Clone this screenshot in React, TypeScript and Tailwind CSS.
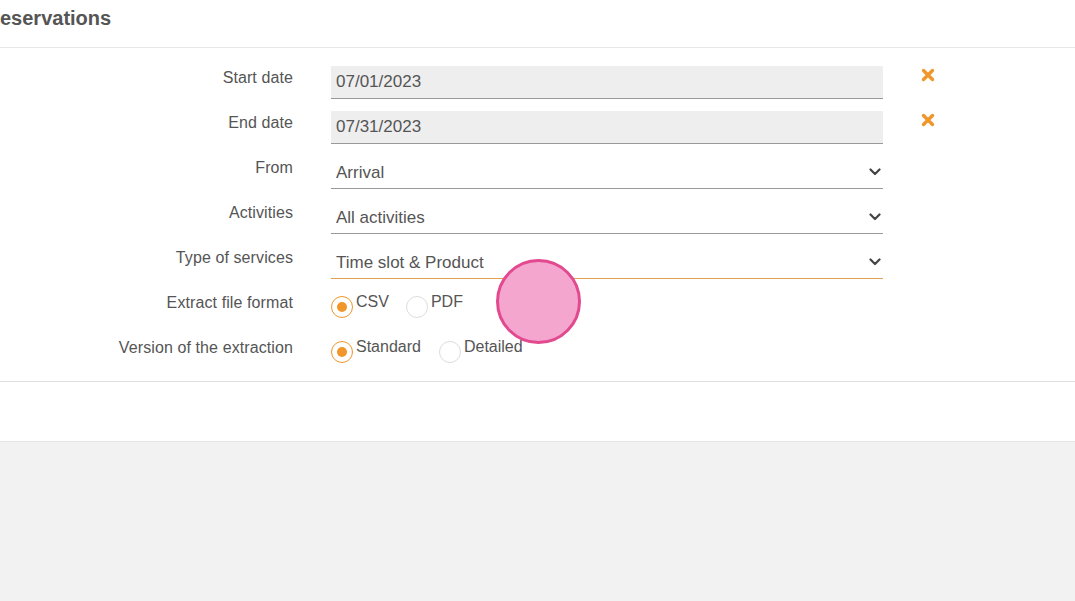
import { useState } from "react";

const font = { fontFamily: '"Liberation Sans", Arial, sans-serif' };

const Chevron = () => (
  <svg width="12" height="8" viewBox="0 0 12 8" className="shrink-0">
    <path d="M1.5 1.5 L6 6 L10.5 1.5" fill="none" stroke="#444" strokeWidth="2.2" strokeLinecap="round" strokeLinejoin="round" />
  </svg>
);

const Cross = () => (
  <svg width="14" height="14" viewBox="0 0 14 14">
    <path d="M2.5 2.5 L11.5 11.5 M11.5 2.5 L2.5 11.5" stroke="#f0962a" strokeWidth="3.4" strokeLinecap="round" />
  </svg>
);

const Row = ({ label, children, extra }: { label: string; children: React.ReactNode; extra?: React.ReactNode }) => (
  <div className="flex h-[45px]">
    <div className="w-[293px] shrink-0 text-right text-[16px] leading-[20px] pt-[2px] tracking-[0.1px] text-[#555]">{label}</div>
    <div className="ml-[38px] w-[552px] shrink-0">{children}</div>
    <div className="ml-[38px] pt-[2px]">{extra}</div>
  </div>
);

const DateInput = ({ value }: { value: string }) => (
  <div className="h-[33px] bg-[#eeeeee] border-b border-[#999] pl-[5px] text-[17px] leading-[32px] text-[#555]">{value}</div>
);

const Select = ({ value, active }: { value: string; active?: boolean }) => (
  <div className={`h-[33px] flex items-center justify-between border-b pl-[5px] pr-[2px] text-[17px] text-[#555] ${active ? "border-[#e0a050]" : "border-[#999]"}`}>
    <span className="pt-[2px]">{value}</span>
    <Chevron />
  </div>
);

const Radio = ({ label, checked, onClick, gap }: { label: string; checked: boolean; onClick: () => void; gap: string }) => (
  <button className={`flex items-start ${gap}`} onClick={onClick}>
    <span className={`mt-[5px] w-[22px] h-[22px] rounded-full border flex items-center justify-center ${checked ? "border-[#f0962a]" : "border-[#ddd]"}`}>
      {checked && <span className="w-[10px] h-[10px] rounded-full bg-[#f0962a]" />}
    </span>
    <span className="ml-[3px] pt-[1px] text-[16px] leading-[20px] text-[#555]">{label}</span>
  </button>
);

export default function App() {
  const [format, setFormat] = useState("CSV");
  const [version, setVersion] = useState("Standard");

  return (
    <div className="relative min-h-[601px] bg-[#f2f2f2] overflow-hidden" style={font}>
      <div className="bg-white">
        <div className="h-[48px] border-b border-[#e8e8e8] flex items-center">
          <h1 className="text-[20px] font-bold text-[#555] -mt-[11px]">eservations</h1>
        </div>
        <div className="pt-[18px] border-b border-[#e0e0e0]">
          <Row label="Start date" extra={<Cross />}>
            <DateInput value="07/01/2023" />
          </Row>
          <Row label="End date" extra={<Cross />}>
            <DateInput value="07/31/2023" />
          </Row>
          <Row label="From">
            <Select value="Arrival" />
          </Row>
          <Row label="Activities">
            <Select value="All activities" />
          </Row>
          <Row label="Type of services">
            <Select value="Time slot & Product" active />
          </Row>
          <Row label="Extract file format">
            <div className="flex">
              <Radio label="CSV" checked={format === "CSV"} onClick={() => setFormat("CSV")} gap="mr-[17px]" />
              <Radio label="PDF" checked={format === "PDF"} onClick={() => setFormat("PDF")} gap="" />
            </div>
          </Row>
          <Row label="Version of the extraction">
            <div className="flex">
              <Radio label="Standard" checked={version === "Standard"} onClick={() => setVersion("Standard")} gap="mr-[18px]" />
              <Radio label="Detailed" checked={version === "Detailed"} onClick={() => setVersion("Detailed")} gap="" />
            </div>
          </Row>
        </div>
        <div className="h-[60px] border-b border-[#e6e6e6]" />
      </div>
      {/* click indicator */}
      <div className="absolute left-[496px] top-[259px] w-[85px] h-[85px] rounded-full bg-[#f4a6cf] border-[3px] border-[#e2498f]" />
    </div>
  );
}
